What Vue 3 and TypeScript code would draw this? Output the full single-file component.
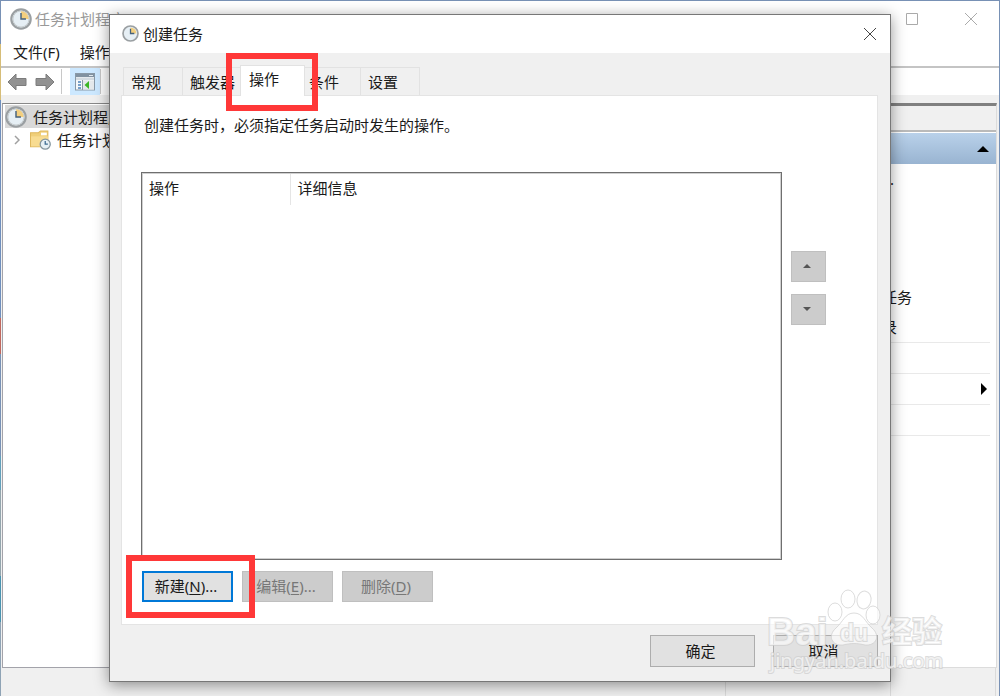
<script setup lang="ts">
import { ref } from 'vue'

interface Tab {
  id: string
  label: string
}

const tabs: Tab[] = [
  { id: 'general', label: '常规' },
  { id: 'triggers', label: '触发器' },
  { id: 'actions', label: '操作' },
  { id: 'conditions', label: '条件' },
  { id: 'settings', label: '设置' },
]
const activeTab = ref('actions')
const columns: string[] = ['操作', '详细信息']
</script>

<template>
  <div class="desktop">
    <main class="window">
      <header class="window-title">
        <svg class="clock-large" viewBox="0 0 20 20" aria-hidden="true">
          <circle cx="10" cy="10" r="8.8" fill="#e9eff3" stroke="#9a9fa2" stroke-width="2" />
          <circle cx="10" cy="10" r="7.3" fill="#e6eff5" stroke="#c3c9cc" stroke-width=".8" />
          <path d="M10 10V3A7 7 0 0 1 17 10Z" fill="#f3cf7f" />
          <path d="M10 4.500V10H14.500" fill="none" stroke="#46617c" stroke-width="1.300" />
        </svg>
        <span class="window-name">任务计划程序</span>
        <button class="caption" aria-label="最大化">
          <svg viewBox="0 0 14 14"><path d="M1.500 1.500H12.500V12.500H1.500Z" /></svg>
        </button>
        <button class="caption" aria-label="关闭">
          <svg viewBox="0 0 14 14"><path d="M1 1 13 13M13 1 1 13" /></svg>
        </button>
      </header>

      <nav class="menu">
        <button>文件(F)</button>
        <button>操作(A)</button>
      </nav>

      <div class="toolbar">
        <button class="tool" aria-label="后退">
          <svg viewBox="0 0 20 18"><path d="M1 9 9 1V5.500H19V12.500H9V17Z" fill="#929292" stroke="#7c7c7c" /></svg>
        </button>
        <button class="tool" aria-label="前进">
          <svg viewBox="0 0 20 18"><path d="M19 9 11 1V5.500H1V12.500H11V17Z" fill="#929292" stroke="#7c7c7c" /></svg>
        </button>
        <span class="separator"></span>
        <button class="tool pressed" aria-label="显示/隐藏控制台树">
          <svg viewBox="0 0 20 18">
            <rect x=".5" y=".5" width="19" height="16.500" fill="#f5f8fa" stroke="#8999a7" />
            <path d="M1 1H19V4H1Z" fill="#8192a1" />
            <path d="M14 2.500H18" stroke="#e0e8ee" />
            <path d="M1 4.500H19V7H1Z" fill="#d3dbe1" />
            <path d="M7.500 7V17" stroke="#8999a7" />
            <path d="M8 7.500H19V16.500H8Z" fill="#e4e8eb" />
            <path d="M3 9H6M3 12H6M3 15H6" stroke="#4c83bb" stroke-width="1.500" />
            <path d="M9.500 12 14 8V16Z" fill="#3cb625" />
          </svg>
        </button>
        <span class="separator"></span>
      </div>

      <div class="workspace">
        <ul class="tree">
          <li class="node selected">
            <svg class="clock-large" viewBox="0 0 20 20" aria-hidden="true">
              <circle cx="10" cy="10" r="8.8" fill="#e9eff3" stroke="#9a9fa2" stroke-width="2" />
              <circle cx="10" cy="10" r="7.3" fill="#e6eff5" stroke="#c3c9cc" stroke-width=".8" />
              <path d="M10 10V3A7 7 0 0 1 17 10Z" fill="#f3cf7f" />
              <path d="M10 4.500V10H14.500" fill="none" stroke="#46617c" stroke-width="1.300" />
            </svg>
            <span>任务计划程序</span>
          </li>
          <li class="node child">
            <svg class="chevron" viewBox="0 0 6 10" aria-hidden="true"><path d="M1 1 5 5 1 9" fill="none" stroke="#a0a0a0" stroke-width="1.500" /></svg>
            <svg class="folder" viewBox="0 0 20 19" aria-hidden="true">
              <path d="M.5 2.500H8L10 1H17V16H.5Z" fill="#f0cf79" stroke="#dfb85d" />
              <path d="M10.500 2.500H16V5H10.500Z" fill="#fff" />
              <path d="M1 6H17V15.500H1Z" fill="#f8dc91" />
              <circle cx="14.500" cy="13.500" r="4.800" fill="#e6f0f5" stroke="#84959e" stroke-width="1.200" />
              <path d="M14.500 10.500V13.500H17" fill="none" stroke="#3d6c91" stroke-width="1.200" />
            </svg>
            <span>任务计划程序库</span>
          </li>
        </ul>
        <section class="overview"></section>
        <aside class="actions">
          <div class="actions-head"></div>
          <button class="group" aria-label="折叠">
            <svg viewBox="0 0 12 6"><path d="M0 6 6 0 12 6Z" /></svg>
          </button>
          <ul class="action-list">
            <li class="row gap-after">连接到另一台计算机...</li>
            <li class="row">显示所有正在运行的任务</li>
            <li class="row">启用所有任务历史记录</li>
            <li class="row ruled"></li>
            <li class="row ruled more">
              <svg viewBox="0 0 6 12" aria-hidden="true"><path d="M0 0 6 6 0 12Z" /></svg>
            </li>
            <li class="row ruled"></li>
            <li class="row ruled"></li>
          </ul>
        </aside>
      </div>
      <footer class="status"><span></span><span></span><span></span></footer>
    </main>

    <section class="dialog" role="dialog" aria-labelledby="dialog-title">
      <header class="dialog-title">
        <svg class="clock-small" viewBox="0 0 20 20" aria-hidden="true">
          <circle cx="10" cy="10" r="8.800" fill="#e6eff5" stroke="#9a9fa2" stroke-width="2" />
          <path d="M10 10V3A7 7 0 0 1 17 10Z" fill="#f3cf7f" />
          <path d="M10 4.500V10H14.500" fill="none" stroke="#46617c" stroke-width="1.500" />
        </svg>
        <h1 id="dialog-title">创建任务</h1>
        <button class="close" aria-label="关闭">
          <svg viewBox="0 0 14 14"><path d="M1 1 13 13M13 1 1 13" /></svg>
        </button>
      </header>

      <div class="tabs" role="tablist">
        <button
          v-for="tab in tabs"
          :key="tab.id"
          class="tab"
          :class="{ active: tab.id === activeTab }"
          role="tab"
          :aria-selected="tab.id === activeTab"
          @click="activeTab = tab.id"
        >
          {{ tab.label }}<span v-if="tab.id === 'actions'" class="mark mark-tab"></span>
        </button>
      </div>

      <div class="pane" role="tabpanel">
        <p class="hint">创建任务时，必须指定任务启动时发生的操作。</p>
        <div class="list-area">
          <div class="list">
            <table>
              <thead>
                <tr><th v-for="column in columns" :key="column" scope="col">{{ column }}</th></tr>
              </thead>
            </table>
          </div>
          <div class="order">
            <button disabled aria-label="上移"><svg viewBox="0 0 8 4"><path d="M0 4 4 0 8 4Z" /></svg></button>
            <button disabled aria-label="下移"><svg viewBox="0 0 8 4"><path d="M0 0 4 4 8 0Z" /></svg></button>
          </div>
        </div>
        <div class="commands">
          <div class="marked">
            <button class="command primary">新建(<u>N</u>)...</button>
            <span class="mark mark-button"></span>
          </div>
          <button class="command" disabled>编辑(<u>E</u>)...</button>
          <button class="command" disabled>删除(<u>D</u>)</button>
        </div>
      </div>

      <footer class="dialog-footer">
        <button class="answer">确定</button>
        <button class="answer">取消</button>
      </footer>
    </section>

    <svg class="watermark" viewBox="0 0 184 90" role="img" aria-label="Baidu 经验">
      <g class="wm-shape">
        <ellipse cx="69" cy="26" rx="7" ry="9" />
        <ellipse cx="82" cy="13" rx="7" ry="9" />
        <ellipse cx="98" cy="14" rx="7" ry="9" transform="rotate(10 98 14)" />
        <ellipse cx="107" cy="29" rx="7" ry="9" />
        <path d="M88 27C97 27 99 36 106 42C115 50 110 60 99 59C91 57 85 57 77 59C66 60 61 50 70 42C77 36 79 27 88 27Z" />
      </g>
      <g class="wm-text">
        <text x="1" y="59" class="wm-brand">Bai</text>
        <text x="74" y="55" class="wm-du">du</text>
        <text x="116" y="56" class="wm-cjk">经验</text>
      </g>
      <text x="4" y="82" class="wm-url">jingyan.baidu.com</text>
    </svg>
  </div>
</template>

<style>
body {
  margin: 0;
}
</style>

<style scoped>
* {
  box-sizing: border-box;
}
.desktop {
  position: relative;
  display: flex;
  min-height: 100vh;
  overflow: hidden;
  padding: 1px 1px 0;
  background: linear-gradient(#7891b5 0 44px, #d6bd78 44px 100px, #6f8fbd 100px 318px, #c0685e 318px 354px, #7891b5 354px 456px, #62a0bb 456px 490px, #93a5ad 490px 576px, #4a93b0 576px 622px, #8fa3b5 622px);
  color: #1a1a1a;
  font: 15px/20px "Noto Sans", "Noto Sans CJK SC", sans-serif;
}
button {
  margin: 0;
  padding: 0;
  border: 0;
  border-radius: 0;
  background: none;
  color: inherit;
  font: inherit;
}
ul {
  margin: 0;
  padding: 0;
  list-style: none;
}
svg {
  display: block;
}
.window {
  display: flex;
  flex: 1;
  flex-direction: column;
  border-right: 1px solid #7891b5;
  margin-right: -1px;
  background: #f0f0f0;
}
.window-title {
  display: flex;
  align-items: center;
  height: 38px;
  padding: 0 21px 2px 9px;
  background: #fff;
  color: #999;
}
.clock-large {
  flex: none;
  width: 22px;
  height: 22px;
}
.window-name {
  flex: 1;
  margin-left: 3px;
}
.caption {
  margin-left: 45px;
}
.caption svg,
.close svg {
  width: 14px;
  height: 14px;
  fill: none;
  stroke: #aaa;
}
.menu {
  display: flex;
  gap: 20px;
  height: 27px;
  padding: 3px 12px 0;
  background: #fff;
}
.menu button {
  height: 20px;
}
.toolbar {
  display: flex;
  align-items: center;
  height: 29px;
  padding-left: 6px;
  border-top: 2px solid #c4c4c4;
  background: #fff;
}
.tool svg {
  width: 20px;
  height: 18px;
}
.tool + .tool {
  margin-left: 8px;
}
.separator {
  width: 1px;
  height: 25px;
  margin-left: 6px;
  background: #c8c8c8;
}
.pressed {
  display: grid;
  place-items: center;
  width: 30px;
  height: 27px;
  margin-left: 8px;
  background: #cce8ff;
}
.pressed + .separator {
  margin-left: 0;
}
.workspace {
  display: grid;
  flex: 1;
  grid-template-columns: 1fr 2fr 270px;
  gap: 4px;
  margin: 8px 2px 0 1px;
}
.tree {
  padding: 1px 2px;
  border: 1px solid #a3a3aa;
  border-top-color: #888;
  background: #fff;
}
.node {
  display: flex;
  align-items: center;
  gap: 6px;
  height: 23px;
  overflow: hidden;
  white-space: nowrap;
}
.node.selected {
  background: #d9d9d9;
}
.node.child {
  padding-left: 9px;
}
.chevron {
  flex: none;
  width: 6px;
  height: 10px;
  margin-right: 4px;
}
.folder {
  flex: none;
  width: 21px;
  height: 20px;
}
.overview,
.actions {
  border: 1px solid #dcdcdc;
  background: #fff;
}
.actions {
  border-top: 3px solid #808080;
  border-left: 0;
}
.actions-head {
  height: 26px;
  margin-bottom: 1px;
  border-bottom: 2px solid #bababa;
  background: #f0f0f0;
}
.group {
  display: flex;
  align-items: center;
  justify-content: flex-end;
  width: 100%;
  height: 31px;
  padding-right: 7px;
  background: linear-gradient(#b9d1ea, #99b4d1);
}
.group svg {
  width: 12px;
  height: 6px;
}
.action-list {
  padding: 0 6px 0 20px;
}
.row {
  height: 30px;
  line-height: 30px;
  white-space: nowrap;
}
.gap-after {
  margin-bottom: 88px;
}
.ruled {
  height: 31px;
  margin-left: -20px;
  border-top: 1px solid #e9e9e9;
}
.more {
  display: flex;
  align-items: center;
  justify-content: flex-end;
  padding-right: 3px;
}
.more svg {
  width: 6px;
  height: 12px;
}
.status {
  display: grid;
  grid-template-columns: 1fr 165px 105px;
  height: 28px;
  padding-right: 3px;
}
.status span {
  border-right: 1px solid #dadada;
}
.dialog {
  position: absolute;
  inset: 14px 109px;
  display: flex;
  flex-direction: column;
  border: 1px solid #777;
  background: #f0f0f0;
  box-shadow: 0 3px 14px rgba(0, 0, 0, 0.42);
}
.dialog-title {
  display: flex;
  flex: none;
  align-items: center;
  height: 38px;
  padding: 0 13px 1px 12px;
  background: #fff;
}
.clock-small {
  width: 17px;
  height: 17px;
}
h1 {
  flex: 1;
  margin: 0 0 0 4px;
  font: inherit;
}
.close svg {
  stroke: #444;
}
.tabs {
  display: flex;
  flex: none;
  align-items: flex-end;
  margin: 12px 12px 0 13px;
}
.tab {
  position: relative;
  width: 60px;
  height: 28px;
  padding-left: 7px;
  border: 1px solid #e2e2e2;
  border-bottom: 0;
  text-align: left;
}
.tab + .tab {
  width: 59px;
  border-left: 0;
}
.tab.tab.active {
  z-index: 1;
  width: 65px;
  height: 31px;
  margin: 0 -3px -1px -2px;
  padding: 0 0 4px 8px;
  border-left: 1px solid #e2e2e2;
  background: #fff;
}
.mark {
  position: absolute;
  z-index: 2;
  border: 6px solid #ff3838;
  pointer-events: none;
}
.mark-tab {
  inset: -13px -14px -15px -15px;
}
.mark-button {
  inset: -16px -22px -16px -16px;
}
.pane {
  display: flex;
  flex: 1;
  flex-direction: column;
  margin: 0 12px 0 11px;
  padding: 19px 51px 22px 19px;
  border: 1px solid #e4e4e4;
  background: #fff;
}
.hint {
  margin: 0 0 37px 3px;
}
.list-area {
  display: flex;
  flex: 1;
  gap: 9px;
}
.list {
  flex: 1;
  border: 1px solid #6f6f6f;
  outline: 1px solid #d0d0d0;
  outline-offset: -2px;
}
table {
  width: 100%;
  border-collapse: collapse;
  table-layout: fixed;
}
th {
  height: 32px;
  padding: 0 7px 2px;
  font-weight: 400;
  text-align: left;
}
th:first-child {
  width: 148px;
  border-right: 1px solid #e5e5e5;
}
.order {
  display: flex;
  flex-direction: column;
  gap: 12px;
  padding-top: 79px;
}
.order button {
  display: grid;
  place-items: center;
  width: 35px;
  height: 31px;
  padding: 0 3px 2px 0;
  border: 1px solid #bfbfbf;
  background: #ccc;
}
.order svg {
  width: 8px;
  height: 4px;
  fill: #555;
}
.commands {
  display: flex;
  gap: 9px;
  margin-top: 11px;
  padding-left: 1px;
}
.marked {
  position: relative;
}
.command {
  width: 91px;
  height: 31px;
  padding: 0 3px 2px 0;
  border: 1px solid #bfbfbf;
  background: #ccc;
  color: #777;
}
.command.primary {
  border: 2px solid #0078d7;
  background: #e1e1e1;
  color: #1a1a1a;
}
.marked .command {
  display: block;
}
.command u {
  text-underline-offset: 2px;
}
.dialog-footer {
  display: flex;
  flex: none;
  justify-content: flex-end;
  gap: 18px;
  padding: 10px 12px 14px;
}
.answer {
  width: 105px;
  height: 32px;
  padding: 0 4px 1px 0;
  border: 1px solid #adadad;
  background: #e1e1e1;
}
.watermark {
  position: absolute;
  right: 50px;
  bottom: 20px;
  width: 184px;
  height: 90px;
  overflow: visible;
  pointer-events: none;
}
.wm-shape,
.wm-text,
.wm-url {
  fill: rgba(255, 255, 255, 0.65);
  stroke: rgba(205, 205, 205, 0.7);
  stroke-width: 1px;
}
.wm-text,
.wm-url {
  paint-order: stroke;
  stroke-width: 2px;
}
.wm-brand {
  font: bold 39px "Liberation Sans", sans-serif;
}
.wm-du {
  font: bold 23px "Liberation Sans", sans-serif;
}
.wm-cjk {
  font: bold 30px "Noto Sans CJK SC", sans-serif;
}
.wm-url {
  font: 20px "Noto Sans", sans-serif;
}
</style>
